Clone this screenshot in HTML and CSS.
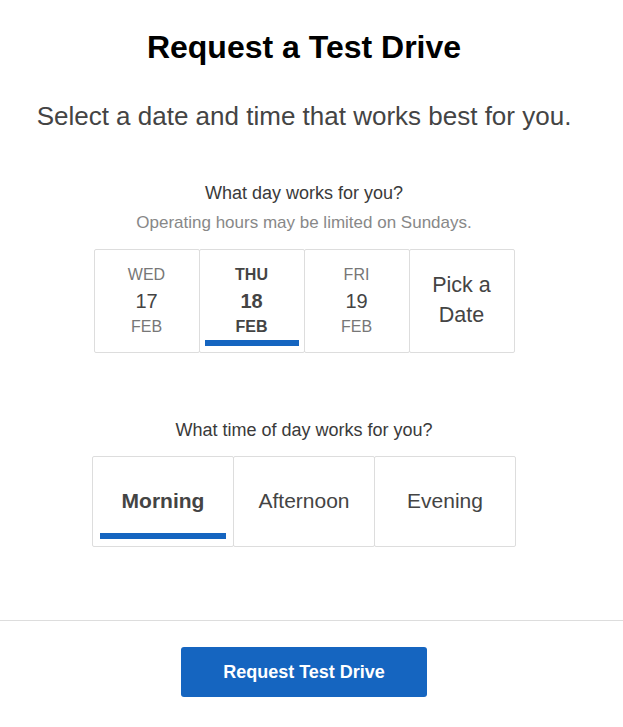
FILE: index.html
```html
<!DOCTYPE html>
<html>
<head>
<meta charset="utf-8">
<link rel="stylesheet" href="styles.css">
</head>
<body>
<main class="page">
  <h1 class="title">Request a Test Drive</h1>
  <p class="subtitle">Select a date and time that works best for you.</p>

  <section class="day-section">
    <p class="question">What day works for you?</p>
    <p class="note">Operating hours may be limited on Sundays.</p>
    <div class="days">
      <div class="day"><span class="dow">WED</span><span class="num">17</span><span class="mon">FEB</span></div>
      <div class="day selected"><span class="dow">THU</span><span class="num">18</span><span class="mon">FEB</span></div>
      <div class="day"><span class="dow">FRI</span><span class="num">19</span><span class="mon">FEB</span></div>
      <div class="day pick">Pick a<br>Date</div>
    </div>
  </section>

  <section class="time-section">
    <p class="question">What time of day works for you?</p>
    <div class="times">
      <div class="time selected">Morning</div>
      <div class="time">Afternoon</div>
      <div class="time">Evening</div>
    </div>
  </section>
</main>
<footer class="footer">
  <button class="submit">Request Test Drive</button>
</footer>
</body>
</html>
```

FILE: styles.css
```css
* { box-sizing: border-box; }
body {
  margin: 0;
  font-family: "Liberation Sans", Arial, sans-serif;
  background: #fff;
  color: #444;
}
.page {
  display: flex;
  flex-direction: column;
  align-items: center;
  padding-top: 29px;
  padding-right: 15px;
}
.title {
  margin: 0;
  font-size: 32px;
  font-weight: bold;
  color: #000;
  line-height: 36px;
}
.subtitle {
  margin: 35px 0 0;
  font-size: 26px;
  line-height: 32px;
  color: #444;
}
.day-section, .time-section {
  display: flex;
  flex-direction: column;
  align-items: center;
}
.day-section { margin-top: 51px; }
.question {
  margin: 0;
  font-size: 18px;
  line-height: 20px;
  color: #3a3a3a;
}
.note {
  margin: 10px 0 0;
  font-size: 17px;
  line-height: 20px;
  color: #888;
}
.days {
  display: flex;
  margin-top: 16px;
}
.day {
  width: 106px;
  height: 104px;
  border: 1px solid #ddd;
  border-radius: 2px;
  margin-left: -1px;
  display: flex;
  flex-direction: column;
  align-items: center;
  justify-content: center;
  position: relative;
  color: #777;
}
.day:first-child { margin-left: 0; }
.dow { font-size: 16px; line-height: 26px; }
.num { font-size: 20px; line-height: 26px; color: #444; }
.mon { font-size: 16px; line-height: 26px; }
.day.selected .dow,
.day.selected .num,
.day.selected .mon { font-weight: bold; color: #444; }
.day.selected::after {
  content: "";
  position: absolute;
  left: 5px;
  right: 5px;
  bottom: 6px;
  height: 6px;
  background: #1565c0;
}
.day.pick {
  font-size: 21.5px;
  line-height: 30px;
  color: #444;
  text-align: center;
  padding-bottom: 3px;
}
.time-section { margin-top: 67px; }
.times {
  display: flex;
  margin-top: 16px;
}
.time {
  width: 142px;
  height: 91px;
  border: 1px solid #ddd;
  border-radius: 2px;
  margin-left: -1px;
  display: flex;
  align-items: center;
  justify-content: center;
  font-size: 21px;
  color: #444;
  position: relative;
  padding-bottom: 2px;
}
.time:first-child { margin-left: 0; }
.time.selected { font-weight: bold; }
.time.selected::after {
  content: "";
  position: absolute;
  left: 7px;
  right: 7px;
  bottom: 7px;
  height: 6px;
  background: #1565c0;
}
.footer {
  margin-top: 73px;
  border-top: 1px solid #ddd;
  display: flex;
  justify-content: center;
  padding-top: 26px;
  padding-right: 15px;
}
.submit {
  width: 246px;
  height: 50px;
  border: none;
  border-radius: 3px;
  background: #1565c0;
  color: #fff;
  font-family: "Liberation Sans", Arial, sans-serif;
  font-size: 18px;
  font-weight: bold;
}
```
